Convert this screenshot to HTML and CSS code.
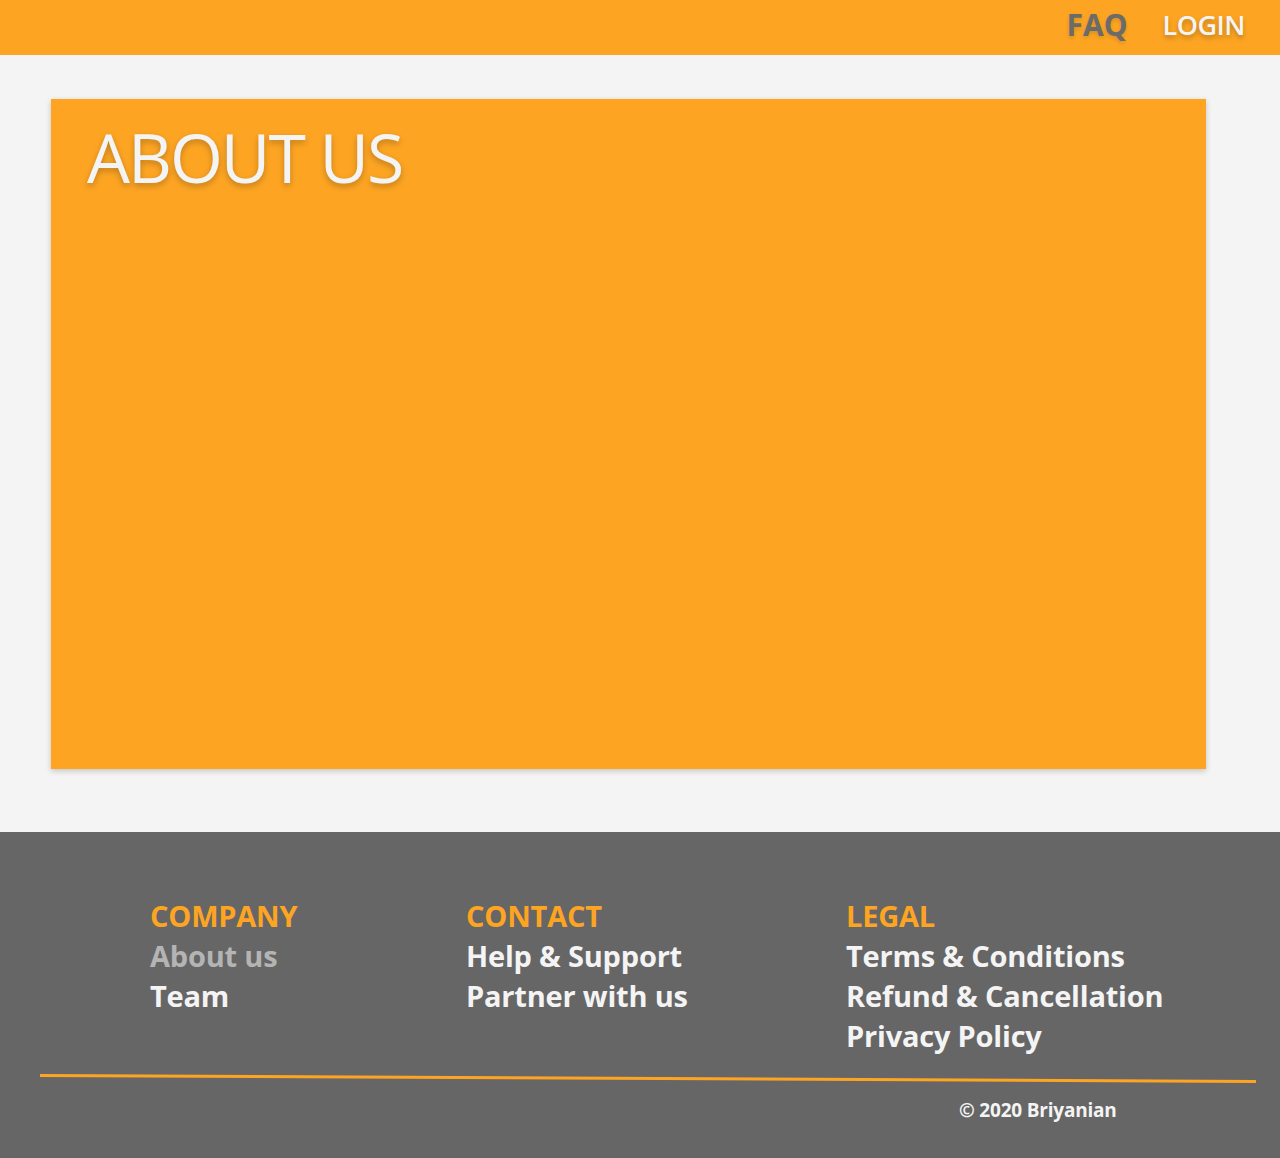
FILE: index.html
```html
<!DOCTYPE html>
<html>
<head>
<meta charset="utf-8">
<link rel="stylesheet" href="styles.css">
</head>
<body>
<header class="topbar">
  <nav class="nav">
    <a class="nav-link faq" href="#">FAQ</a>
    <a class="nav-link login" href="#">LOGIN</a>
  </nav>
</header>
<main class="main">
  <section class="card">
    <h1 class="card-title">ABOUT US</h1>
  </section>
</main>
<footer class="footer">
  <div class="cols">
    <div class="col col-company">
      <h3 class="col-title">COMPANY</h3>
      <a class="col-link muted" href="#">About us</a>
      <a class="col-link" href="#">Team</a>
    </div>
    <div class="col col-contact">
      <h3 class="col-title">CONTACT</h3>
      <a class="col-link" href="#">Help &amp; Support</a>
      <a class="col-link" href="#">Partner with us</a>
    </div>
    <div class="col col-legal">
      <h3 class="col-title">LEGAL</h3>
      <a class="col-link" href="#">Terms &amp; Conditions</a>
      <a class="col-link" href="#">Refund &amp; Cancellation</a>
      <a class="col-link" href="#">Privacy Policy</a>
    </div>
  </div>
  <hr class="rule">
  <p class="copy">© 2020 Briyanian</p>
</footer>
</body>
</html>
```
FILE: styles.css
```css
* { box-sizing: border-box; }
html, body { margin: 0; padding: 0; }
body {
  background: #f4f4f4;
  font-family: "Open Sans", "Noto Sans", sans-serif;
}
.topbar {
  height: 55px;
  background: #fda523;
  display: flex;
  justify-content: flex-end;
  align-items: center;
  padding-right: 35px;
}
.nav { display: flex; gap: 35px; align-items: center; padding-bottom: 5px; }
.nav-link {
  text-decoration: none;
  line-height: 50px;
}
.faq {
  color: #6b6b6b;
  font-size: 30px;
  font-weight: 700;
  text-shadow: 0 2px 4px rgba(0,0,0,0.15);
}
.login {
  color: #f4f4f4;
  font-size: 27px;
  font-weight: 600;
  letter-spacing: -0.5px;
  text-shadow: 0 3px 5px rgba(0,0,0,0.25);
}
.main {
  padding: 44px 74px 63px 51px;
}
.card {
  height: 670px;
  background: #fda523;
  box-shadow: 0 2px 6px rgba(0,0,0,0.2);
  padding: 18px 36px;
}
.card-title {
  margin: 0;
  color: #f4f4f4;
  font-weight: 400;
  font-size: 68px;
  line-height: 80px;
  letter-spacing: -2px;
  text-shadow: 0 3px 6px rgba(0,0,0,0.25);
}
.footer {
  background: #666666;
  height: 326px;
  padding-top: 64px;
}
.cols {
  display: flex;
  padding-left: 150px;
}
.col { display: flex; flex-direction: column; }
.col-company { width: 316px; }
.col-contact { width: 380px; }
.col-title {
  margin: 0;
  color: #fda523;
  font-size: 29px;
  font-weight: 700;
  line-height: 40px;
  letter-spacing: -0.2px;
}
.col-link {
  color: #f4f4f4;
  text-decoration: none;
  font-size: 29px;
  font-weight: 700;
  line-height: 40px;
  letter-spacing: -0.2px;
}
.col-link.muted { color: #b4b4b4; }
.rule {
  margin: 21px 24px 0 40px;
  border: 0;
  height: 3px;
  background: #fda523;
  transform: rotate(0.28deg);
}
.copy {
  margin: 17px 0 0 959px;
  color: #f4f4f4;
  font-size: 19px;
  font-weight: 700;
  letter-spacing: -0.2px;
}
```
